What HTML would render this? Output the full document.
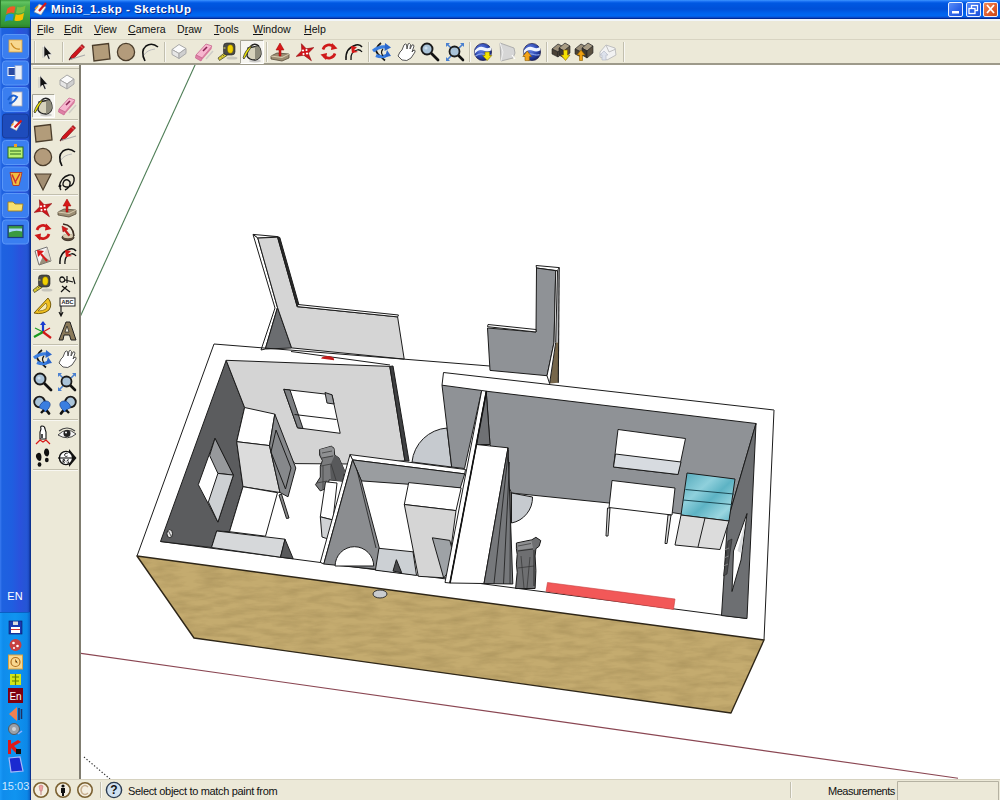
<!DOCTYPE html>
<html><head><meta charset="utf-8">
<style>
*{margin:0;padding:0;box-sizing:border-box}
html,body{width:1000px;height:800px;overflow:hidden;background:#ece9d8;font-family:"Liberation Sans",sans-serif}
.a{position:absolute}
#task{left:0;top:0;width:31px;height:800px;background:linear-gradient(90deg,#3a7af0 0,#1e62e0 2px,#1f5ee0 12px,#2a52dc 20px,#2456d4 27px,#1d48c0 29px,#0c3290 30px,#0c3290 31px)}
#wline{left:31px;top:19px;width:1px;height:781px;background:#dfe8fa}
#start{left:0;top:0;width:30px;height:28px;background:linear-gradient(180deg,#3c9a3c 0,#62c462 2px,#4cb04c 6px,#3ea43e 16px,#349634 24px,#2a7e2a 28px);border-left:1px solid #2a7a2a;border-bottom:1px solid #1c5e1c}
.qb{left:2px;width:27px;height:25px;border-radius:3px;background:linear-gradient(180deg,#4a8cf5 0,#3b7ff0 50%,#3576ea 100%);border:1px solid #2a62d8}
.qb.p{background:#1d48b8;border-color:#173c9c}
#tray{left:0;top:612px;width:30px;height:188px;background:linear-gradient(90deg,#1a9af8 0,#0f8cec 3px,#1094f0 50%,#0c88e8 90%,#0a66c8 100%);border-top:1px solid #0a5fc4}
#title{left:30px;top:0;width:970px;height:19px;background:linear-gradient(180deg,#3d95ff 0,#1a70f2 1.5px,#0058e2 3px,#0050d8 9px,#0062ec 13px,#0068f2 16px,#0a4ac8 17.5px,#002c98 18.5px,#002c98 19px)}
#ttext{left:51px;top:2.7px;color:#fff;font-weight:bold;font-size:11.5px;letter-spacing:0.55px;text-shadow:1px 1px 0 #0a2a8a;white-space:nowrap}
.tb{top:2px;width:15px;height:15px;border:1px solid #e8f0ff;border-radius:2px;background:linear-gradient(135deg,#5a8ef8 0,#2a62e8 60%,#1e50d8 100%)}
#menu{left:31px;top:19px;width:969px;height:20px;background:#ece9d8;border-top:2px solid #f2f6fa}
.m{top:3px;font-size:10.6px;color:#111;white-space:nowrap}
.m u{text-decoration:underline}
#tool{left:31px;top:39px;width:969px;height:26px;background:#ece9d8;border-top:1px solid #d8d4c2;border-bottom:2px solid #9d9a8a}
#ltool{left:31px;top:65px;width:50px;height:714px;background:#ece9d8;border-right:2px solid #807d70}
#view{left:81px;top:65px;width:919px;height:714px;background:#fff;overflow:hidden}
#status{left:31px;top:779px;width:969px;height:21px;background:#ece9d8;border-top:1px solid #d6d2c0}
.st{font-size:11px;color:#111;white-space:nowrap;letter-spacing:-0.33px}
</style></head><body>
<div id="task" class="a"></div>
<div id="start" class="a"></div>
<div id="wline" class="a"></div>
<div id="tray" class="a"></div>
<div id="title" class="a"></div>
<div id="ttext" class="a">Mini3_1.skp - SketchUp</div>
<div class="a tb" style="left:948px"></div>
<div class="a tb" style="left:966px"></div>
<div class="a tb" style="left:983px;background:linear-gradient(135deg,#f08a5a 0,#e05a2a 60%,#c84818 100%)"></div>
<div id="menu" class="a"></div>
<div class="a m" style="left:37px;top:23px"><u>F</u>ile</div>
<div class="a m" style="left:64px;top:23px"><u>E</u>dit</div>
<div class="a m" style="left:94px;top:23px"><u>V</u>iew</div>
<div class="a m" style="left:128px;top:23px"><u>C</u>amera</div>
<div class="a m" style="left:177px;top:23px">D<u>r</u>aw</div>
<div class="a m" style="left:214px;top:23px"><u>T</u>ools</div>
<div class="a m" style="left:253px;top:23px"><u>W</u>indow</div>
<div class="a m" style="left:304px;top:23px"><u>H</u>elp</div>
<div id="tool" class="a"></div>
<div id="ltool" class="a"></div>
<div id="view" class="a"></div>
<!--MODEL-->
<svg class="a" style="left:0;top:0" width="1000" height="800" viewBox="0 0 1000 800">
<defs><clipPath id="vp"><rect x="81" y="65" width="919" height="714"/></clipPath>
<filter id="wt" x="0" y="0" width="100%" height="100%" color-interpolation-filters="sRGB"><feTurbulence type="fractalNoise" baseFrequency="0.04 0.16" numOctaves="3" seed="11"/><feColorMatrix values="0 0 0 0 0.64  0 0 0 0 0.55  0 0 0 0 0.34  1.1 0 0 0 -0.38"/><feComposite in2="SourceGraphic" operator="in"/></filter>
<linearGradient id="glass" x1="0" y1="0" x2="1" y2="1"><stop offset="0" stop-color="#4fa6b8"/><stop offset=".35" stop-color="#8fd0dc"/><stop offset=".55" stop-color="#5db3c4"/><stop offset=".8" stop-color="#9ad6e0"/><stop offset="1" stop-color="#58adbf"/></linearGradient>
</defs>
<g clip-path="url(#vp)" stroke-linejoin="round">
<line x1="80" y1="653.2" x2="958" y2="778.2" stroke="#8a4652" stroke-width="1.15"/>
<line x1="195.5" y1="64" x2="80" y2="317" stroke="#4d7d55" stroke-width="1.1"/>
<line x1="84" y1="757" x2="110" y2="779" stroke="#333" stroke-width="1.2" stroke-dasharray="1.3 2"/>
<polygon points="253,234.4 277.5,236.6 257.8,238.1" fill="#fff" stroke="#1b1b1b" stroke-width="1"/>
<polygon points="253,234.4 275,308 261,350 265.3,349 277.5,307.5 257.8,238.1" fill="#fff" stroke="#1b1b1b" stroke-width="1"/>
<polygon points="277.5,307.5 291.6,348 265.3,349" fill="#6b6d70" stroke="#1b1b1b" stroke-width="1"/>
<polygon points="257.8,238.1 277.5,237.2 297.2,306.6 397.6,316.9 404.2,359.1 291.6,347.9 277.5,307.5" fill="#d5d5d5" stroke="#1b1b1b" stroke-width="1"/>
<polygon points="277.5,236.6 279.8,237.5 299.5,306.8 297.2,306.6" fill="#2a2a2a" stroke="#1b1b1b" stroke-width="1"/>
<polygon points="297.2,306.6 298,304.5 398.5,315 397.6,316.9" fill="#fff" stroke="#1b1b1b" stroke-width="1"/>
<polyline points="291,351.5 390,365" fill="none" stroke="#1b1b1b" stroke-width="1"/>
<path d="M321,358.6 A6.5,3.2 0 0 1 334,360.2 Z" fill="#c41a1a" stroke="none"/>
<polygon points="536.1,265.5 559.2,267.6 557.5,270.7 536.5,268" fill="#fff" stroke="#1b1b1b" stroke-width="1"/>
<polygon points="536.5,268 555.7,270.7 554,342.5 547,375.7 490,370.4 487.5,328 536,332" fill="#8f9296" stroke="#1b1b1b" stroke-width="1"/>
<polygon points="557.5,270.7 559.2,268 558.7,342.5 555.7,342.5" fill="#b4b5b7" stroke="none"/>
<polygon points="555.7,342.5 558.7,342.5 558.3,382.7 549.6,383.6" fill="#76664a" stroke="none"/>
<polygon points="555.7,270.7 557.5,270.7 555.7,342.5 549.6,383.6 547,375.7 554,342.5" fill="#fff" stroke="#1b1b1b" stroke-width="1"/>
<polyline points="559.2,267.6 558.3,382.7" fill="none" stroke="#1b1b1b" stroke-width="1.1"/>
<polygon points="487.5,326.7 536,332 536,329.5 488,324.5" fill="#fff" stroke="#1b1b1b" stroke-width="1"/>
<polyline points="214,344 489.7,366" fill="none" stroke="#1b1b1b" stroke-width="1"/>
<polyline points="774,410 764,640" fill="none" stroke="#1b1b1b" stroke-width="1"/>
<polyline points="137,556 214,344" fill="none" stroke="#1b1b1b" stroke-width="1"/>
<polyline points="160.5,541.5 747,618.5" fill="none" stroke="#1b1b1b" stroke-width="1"/>
<polygon points="226.2,360.3 244.6,407.5 236.7,441.7 243,486.7 229.5,531.7 216.7,531 211.5,547.5 160.5,541.5" fill="#5b5c5e" stroke="#1b1b1b" stroke-width="1"/>
<polygon points="226.2,360.3 389.8,366.4 404.9,460.8 352,464 295,463.6 244.6,407.5" fill="#d4d4d4" stroke="#1b1b1b" stroke-width="1"/>
<polygon points="389.8,366.4 393,366 409,461 404.9,460.8" fill="#3f4042" stroke="#1b1b1b" stroke-width="1"/>
<polygon points="283.8,389.3 332,394.8 340.2,433.3 297.5,427.8" fill="#fff" stroke="#1b1b1b" stroke-width="1"/>
<polygon points="283.8,389.3 290,390 303,428.5 297.5,427.8" fill="#7d7f82" stroke="#1b1b1b" stroke-width="1"/>
<polygon points="325,392.5 332,394.8 334,404 327,403" fill="#9a9c9f" stroke="#1b1b1b" stroke-width="1"/>
<polyline points="294.5,414.5 336.5,419.5" fill="none" stroke="#1b1b1b" stroke-width="1"/>
<polygon points="215,438.3 233.4,475.1 217.9,522.1 198.3,484.7" fill="#fff" stroke="#1b1b1b" stroke-width="1"/>
<polygon points="215,438.3 233.4,475.1 217.9,473.4 209.6,455.5" fill="#97999c" stroke="#1b1b1b" stroke-width="1"/>
<polygon points="217.9,473.4 233.4,475.1 217.9,522.1 208.4,501.9" fill="#cdd0d3" stroke="#1b1b1b" stroke-width="1"/>
<ellipse cx="169.7" cy="533.6" rx="2.8" ry="4" fill="#e8e8e8" stroke="#222" stroke-width="1"/><path d="M168.5,531 L171,536" stroke="#333" stroke-width="0.8"/>
<polygon points="244.6,407.5 274.8,414.1 269.5,445.6 236.7,441.7" fill="#fff" stroke="#1b1b1b" stroke-width="1"/>
<polygon points="236.7,441.7 269.5,445.6 280,492.5 243,486.7" fill="#dcdcdc" stroke="#1b1b1b" stroke-width="1"/>
<polygon points="274.8,414.1 295.8,468 288,496.8 280,492.5 269.5,445.6" fill="#86888b" stroke="#1b1b1b" stroke-width="1"/>
<polyline points="276,430 291,468 285.5,489 271,452 276,430" fill="none" stroke="#1b1b1b" stroke-width="1"/>
<polygon points="243,486.7 277.5,492.7 265.5,536.2 229.5,531.7" fill="#fff" stroke="#1b1b1b" stroke-width="1"/>
<polygon points="279,495 281.5,494 289,518 286.5,518.5" fill="#8a8a8a" stroke="#1b1b1b" stroke-width="1"/>
<polygon points="216.7,531 285,539.2 280.5,557.2 211.5,547.5" fill="#d6d8da" stroke="#1b1b1b" stroke-width="1"/>
<polygon points="285,539.2 293.2,558.7 280.5,557.2" fill="#58595b" stroke="#1b1b1b" stroke-width="1"/>
<polygon points="319.6,449.6 331.3,446.2 334,448.2 334.7,455.1 338.9,457.9 344.4,470.2 342.3,481.2 329.2,479.9 327.2,488.1 320.3,490.9 315.5,484.7 320.3,477.1 320.3,466.1 322.4,460.6 319.6,455.1" fill="#7a7b7d" stroke="#222" stroke-width="1"/>
<polygon points="334.7,455.1 338.9,457.9 344.4,470.2 342.3,481.2 331,480 330,466" fill="#58595b" stroke="none"/>
<polygon points="320,449.5 331,446.5 334,449 334,455 322,458" fill="#8f9092" stroke="none"/>
<polyline points="322,453 332,451" fill="none" stroke="#333" stroke-width="0.7"/>
<polyline points="322,458 333,456" fill="none" stroke="#333" stroke-width="0.8"/>
<polyline points="321,466 331,464 336,480" fill="none" stroke="#333" stroke-width="0.7"/>
<polyline points="323,466 323,489" fill="none" stroke="#333" stroke-width="0.7"/>
<polyline points="317,483 327,481" fill="none" stroke="#333" stroke-width="0.7"/>
<polygon points="325.5,481.8 337,483 333,520 320.3,516.8" fill="#fff" stroke="#1b1b1b" stroke-width="1"/>
<polygon points="320.3,516.8 333,520 331,540 322,537" fill="#d0d2d4" stroke="#1b1b1b" stroke-width="1"/>
<polygon points="350,454.6 465.5,469.5 464.7,473.9 352.6,459.9" fill="#fff" stroke="#1b1b1b" stroke-width="1"/>
<polygon points="352.6,459.9 464.7,473.9 460.3,487.9 361.4,480.9" fill="#9a9da0" stroke="#1b1b1b" stroke-width="1"/>
<polygon points="350,454.6 352.6,459.9 323.8,564 320.3,562.3" fill="#fff" stroke="#1b1b1b" stroke-width="1"/>
<polygon points="352.6,459.9 361.4,480.9 379.8,550 376.3,569.3 323.8,564" fill="#8b8d90" stroke="#1b1b1b" stroke-width="1"/>
<polyline points="357,470 376,548" fill="none" stroke="#1b1b1b" stroke-width="0.8"/>
<path d="M335.1,566 A19.3,19.3 0 0 1 373.7,566 Z" fill="#fff" stroke="#1b1b1b" stroke-width="1"/>
<polygon points="378.9,548.3 413,551.8 416.5,575.4 375.4,570.2" fill="#ccd0d4" stroke="#1b1b1b" stroke-width="1"/>
<polygon points="393,571 396.4,559.7 401.7,572.8" fill="#4a4b4d" stroke="#1b1b1b" stroke-width="1"/>
<polygon points="408.7,482.6 461.2,487.9 456,510.6 404.3,504.5" fill="#fff" stroke="#1b1b1b" stroke-width="1"/>
<polygon points="404.3,504.5 456,510.6 447,578 418.3,576.3" fill="#d5d5d5" stroke="#1b1b1b" stroke-width="1"/>
<path d="M432.3,537.8 L449.8,540.4 A36,36 0 0 1 443.7,578 Z" fill="#9ea2a6" stroke="#1b1b1b" stroke-width="1"/>
<polygon points="443.5,372.5 774,410 756,423.5 486.2,391.2 481.7,390.5 442,385.2" fill="#fff" stroke="none"/>
<polyline points="442,385.2 443.5,372.5 774,410" fill="none" stroke="#1b1b1b" stroke-width="1"/>
<path d="M412,462 A38,38 0 0 1 447,428 L451.7,467 Z" fill="#c6cacf" stroke="#1b1b1b" stroke-width="1"/>
<polygon points="442,385.2 481.7,390.5 464.5,468.5 451.7,467" fill="#8f9296" stroke="#1b1b1b" stroke-width="1"/>
<polygon points="486.2,391.2 756,423.5 727.5,521 609,503 511.5,493 490,444.5" fill="#8f9296" stroke="#1b1b1b" stroke-width="1"/>
<polygon points="756,423.5 747,618.5 721.5,615.5 727.5,521" fill="#6d6f72" stroke="#1b1b1b" stroke-width="1"/>
<polygon points="747,513.5 733.5,551 732,591.5 741,560" fill="#fff" stroke="#1b1b1b" stroke-width="1"/>
<polygon points="745,522 741,553 737.5,551" fill="#d8dadc" stroke="none"/>
<polygon points="728,541 732,539 727,574 723.5,576" fill="#4a4b4d" stroke="#222" stroke-width="0.6"/>
<polyline points="724.5,550 729,548" fill="none" stroke="#aaa" stroke-width="0.6"/>
<polyline points="724,558 728.5,556" fill="none" stroke="#aaa" stroke-width="0.6"/>
<polyline points="723.5,566 728,564" fill="none" stroke="#aaa" stroke-width="0.6"/>
<polygon points="481.7,390.5 486.5,391.2 450,583 445,582.5" fill="#fff" stroke="#1b1b1b" stroke-width="1"/>
<polygon points="486.2,391.2 490,444.5 476.5,444.5" fill="#6f7174" stroke="#1b1b1b" stroke-width="1"/>
<polygon points="476.5,444.5 508,447.8 484,583.5 450,583" fill="#fff" stroke="#1b1b1b" stroke-width="1"/>
<polygon points="508,447.8 512.8,584 484,583.5" fill="#76787b" stroke="#1b1b1b" stroke-width="1"/>
<polyline points="508.5,450 494,583.5" fill="none" stroke="#1b1b1b" stroke-width="0.8"/>
<polyline points="509.5,462 503.5,584" fill="none" stroke="#1b1b1b" stroke-width="0.8"/>
<polyline points="510.5,492 510,584" fill="none" stroke="#1b1b1b" stroke-width="0.7"/>
<polyline points="486.5,391.2 450,583" fill="none" stroke="#111" stroke-width="1.6"/>
<path d="M511.5,493 L532.5,497 A26,26 0 0 1 511.5,523 Z" fill="#c6cacf" stroke="#1b1b1b" stroke-width="1"/>
<polygon points="618,429.5 685.5,438.5 678,474.5 613.5,467" fill="#fff" stroke="#1b1b1b" stroke-width="1"/>
<polygon points="615.5,454 681,462 678,474.5 613.5,467" fill="#d7dbe0" stroke="#1b1b1b" stroke-width="1"/>
<polygon points="612,480.5 675,488 672,515 609,507.5" fill="#fff" stroke="#1b1b1b" stroke-width="1"/>
<polygon points="607.5,508 610,508 608,536 606,536" fill="#ddd" stroke="#1b1b1b" stroke-width="1"/>
<polygon points="668,515 671,515 667,543.5 665,543.5" fill="#ddd" stroke="#1b1b1b" stroke-width="1"/>
<polygon points="687,473 735,479 729,521 681,515" fill="url(#glass)" stroke="#1b1b1b" stroke-width="1"/>
<polyline points="685.5,489.5 734,494" fill="none" stroke="#1d4a55" stroke-width="1"/>
<polyline points="683,500 731.5,504.5" fill="none" stroke="#1d4a55" stroke-width="1"/>
<polygon points="681,515 729,521 720,549.5 675,545" fill="#dcdcdc" stroke="#1b1b1b" stroke-width="1"/>
<polyline points="705,518 698,547" fill="none" stroke="#1b1b1b" stroke-width="1"/>
<polygon points="547.5,582.5 675,599 673.5,609.5 546,591.5" fill="#f25858" stroke="#c84040" stroke-width="0.6"/>
<polygon points="516.4,543 531.8,539.8 535.9,537.3 540.8,540.6 539.1,546.3 535.9,548.7 535.1,556 535.9,570.7 535.1,588.5 515.6,588.5 517.2,572.3 516.4,564.1 517.2,554.4 516.4,548.7" fill="#6e6f71" stroke="#1a1a1a" stroke-width="1"/>
<polygon points="517,543.5 531.5,540.5 533,548 518,550" fill="#8e8f91" stroke="none"/>
<polyline points="518,546 531,543.5" fill="none" stroke="#333" stroke-width="0.7"/>
<polyline points="518,551 533,549" fill="none" stroke="#222" stroke-width="0.8"/>
<polyline points="521,556 524,588" fill="none" stroke="#333" stroke-width="0.7"/>
<polyline points="530,557 527,588" fill="none" stroke="#333" stroke-width="0.7"/>
<polyline points="518,568 534,566" fill="none" stroke="#333" stroke-width="0.7"/>
<polyline points="534,550 534,586" fill="none" stroke="#222" stroke-width="0.9"/>
<polygon points="137,556 764,640 731,713 194,638" fill="#c4ab6f" stroke="none"/>
<polygon points="137,556 764,640 731,713 194,638" fill="#c8ab6e" filter="url(#wt)" stroke="none"/>
<polygon points="137,556 764,640 731,713 194,638" fill="none" stroke="#2e2618" stroke-width="1.4"/>
<ellipse cx="380" cy="594" rx="7" ry="4" fill="#c9ccd0" stroke="#333" stroke-width="1"/>
</g>
</svg>
<!--/MODEL-->
<div id="status" class="a"></div>
<div class="a st" style="left:128px;top:785px">Select object to match paint from</div>
<div class="a st" style="left:828px;top:785px;letter-spacing:-0.5px">Measurements</div>
<!--CHROME-->
<svg class="a" style="left:0;top:0" width="1000" height="800" viewBox="0 0 1000 800">
<defs><radialGradient id="glb" cx=".4" cy=".35" r=".7"><stop offset="0" stop-color="#6a86e8"/><stop offset=".6" stop-color="#2a46b0"/><stop offset="1" stop-color="#141c60"/></radialGradient></defs>
<rect x="240.5" y="40.5" width="23" height="23" fill="#f6f5f0"/>
<path d="M240.5,63.5 L240.5,40.5 L263.5,40.5" fill="none" stroke="#a5a394" stroke-width="1"/>
<path d="M263.5,40.5 L263.5,63.5 L240.5,63.5" fill="none" stroke="#fff" stroke-width="1"/>
<line x1="34.5" y1="41" x2="34.5" y2="63" stroke="#c2bfae" stroke-width="1"/>
<line x1="35.5" y1="41" x2="35.5" y2="63" stroke="#f8f7f2" stroke-width="1"/>
<line x1="62.5" y1="42" x2="62.5" y2="62" stroke="#c2bfae" stroke-width="1"/>
<line x1="63.5" y1="42" x2="63.5" y2="62" stroke="#f8f7f2" stroke-width="1"/>
<line x1="164.5" y1="42" x2="164.5" y2="62" stroke="#c2bfae" stroke-width="1"/>
<line x1="165.5" y1="42" x2="165.5" y2="62" stroke="#f8f7f2" stroke-width="1"/>
<line x1="266.5" y1="42" x2="266.5" y2="62" stroke="#c2bfae" stroke-width="1"/>
<line x1="267.5" y1="42" x2="267.5" y2="62" stroke="#f8f7f2" stroke-width="1"/>
<line x1="368.5" y1="42" x2="368.5" y2="62" stroke="#c2bfae" stroke-width="1"/>
<line x1="369.5" y1="42" x2="369.5" y2="62" stroke="#f8f7f2" stroke-width="1"/>
<line x1="469.5" y1="42" x2="469.5" y2="62" stroke="#c2bfae" stroke-width="1"/>
<line x1="470.5" y1="42" x2="470.5" y2="62" stroke="#f8f7f2" stroke-width="1"/>
<line x1="546.5" y1="42" x2="546.5" y2="62" stroke="#c2bfae" stroke-width="1"/>
<line x1="547.5" y1="42" x2="547.5" y2="62" stroke="#f8f7f2" stroke-width="1"/>
<line x1="623.5" y1="42" x2="623.5" y2="62" stroke="#c2bfae" stroke-width="1"/>
<line x1="624.5" y1="42" x2="624.5" y2="62" stroke="#f8f7f2" stroke-width="1"/>
<g transform="translate(47,52) scale(1.0)"><path d="M-3,-6.5 L-3,5.5 L-0.5,3 L1.5,7.5 L3.2,6.8 L1.3,2.5 L4.8,2.5 Z" fill="#111" stroke="#fff" stroke-width="0.6"/><path d="M-4,-5 L-4,6" stroke="#bbb" stroke-width="0.8"/></g>
<g transform="translate(76,52) scale(1.0)"><path d="M-7,8 L-4.5,3.5 L6,-7.5 L8.5,-5 L-2,6 Z" fill="#d0141c" stroke="#7a0a0e" stroke-width="0.7"/><path d="M-7,8 L-5.5,5 L-4,6.5 Z" fill="#222"/><path d="M-6,7.5 L9,3" stroke="#aaa" stroke-width="1.2"/><path d="M4.5,-6 L7,-3.5" stroke="#f4a0a0" stroke-width="0.8"/></g>
<g transform="translate(101,52) scale(1.0)"><path d="M-8.5,-6.5 L7.5,-8.5 L9,7 L-7,9 Z" fill="#b29c7a" stroke="#4b3d2b" stroke-width="1.3"/></g>
<g transform="translate(126,52) scale(1.0)"><circle cx="0" cy="0" r="8.6" fill="#b39b7b" stroke="#4b3d2b" stroke-width="1.3"/></g>
<g transform="translate(150,52) scale(1.0)"><path d="M-5,9 Q-10,-1 -4,-6 Q2,-10 8,-5" fill="none" stroke="#111" stroke-width="1.6"/><path d="M-6,3 Q-3,-2 5,-3" fill="none" stroke="#bbb" stroke-width="1"/></g>
<g transform="translate(179,51.5) scale(1.0)"><path d="M-7,-2 L0,-7 L7,-3 L0,2 Z" fill="#fbfbfb" stroke="#a8a8a8" stroke-width="1"/><path d="M-7,-2 L0,2 L0,7 L-7,3 Z" fill="#e6e6e6" stroke="#a8a8a8" stroke-width="1"/><path d="M0,2 L7,-3 L7,2 L0,7 Z" fill="#cfcfcf" stroke="#a8a8a8" stroke-width="1"/></g>
<g transform="translate(204,52) scale(1.0)"><path d="M-8,3 L2,-8 L8,-6 L-2,6 Z" fill="#f7b6cf" stroke="#c86a90" stroke-width="0.8"/><path d="M-8,3 L-2,6 L-3,9 L-8.5,6 Z" fill="#e07fa6" stroke="#c86a90" stroke-width="0.8"/><path d="M-2,6 L8,-6 L7.5,-3 L-3,9 Z" fill="#d9789e"/><path d="M-1,-1 L3,-5" stroke="#8a2050" stroke-width="1.6"/><path d="M2,7 L9,-1" stroke="#bbb" stroke-width="1.5" opacity=".6"/></g>
<g transform="translate(228,52) scale(1.0)"><ellipse cx="4" cy="6" rx="5.5" ry="1.6" fill="#9a9a9a" opacity=".45"/><path d="M-3,0.5 L-10,6 L-8.5,8.5 L-1,3.5 Z" fill="#dccc30" stroke="#3a3a20" stroke-width="0.7"/><path d="M-5,3 L-4,4 M-7,4.5 L-6,5.5" stroke="#333" stroke-width="0.7"/><rect x="-4.5" y="-9" width="11.5" height="12" rx="3.2" fill="#4a4a46" stroke="#222" stroke-width="0.6"/><ellipse cx="2.3" cy="-3" rx="2.9" ry="4.2" fill="#f0d000" stroke="#7a6600" stroke-width="0.5"/><path d="M-4.5,-4 L-2.5,-4" stroke="#e8e070" stroke-width="1"/></g>
<g transform="translate(252,52) scale(1.0)"><ellipse cx="3" cy="9" rx="6" ry="1.5" fill="#999" opacity=".45"/><path d="M-4,-4 L6,-6 Q9,-4 9,2 Q8,7 3,8 Q-3,8 -5,4 Z" fill="#d6d2bc" stroke="#222" stroke-width="1.3"/><path d="M3,-5.2 L6,-6 Q9,-4 9,2 Q8,7 3,8 Z" fill="#8e8c7c"/><path d="M-2,-5 Q2,-10 7,-6" fill="none" stroke="#222" stroke-width="1.4"/><path d="M-9,6 Q-7,-2 0,-7 Q-1,-4 -4,0 Q-6,4 -8,7 Z" fill="#f0e800" stroke="#333" stroke-width="0.8"/></g>
<g transform="translate(280,52) scale(1.0)"><path d="M-9,4 L-3,1 L9,2 L9,6 L2,9 L-9,7 Z" fill="#9c8e74" stroke="#554a38" stroke-width="0.8"/><path d="M-9,4 L2,5.5 L9,2" fill="none" stroke="#e8dcc0" stroke-width="0.8"/><path d="M-1,4 L-1,-2 L-4,-2 L0,-9 L4,-2 L1,-2 L1,4 Z" fill="#d81818" stroke="#900" stroke-width="0.5"/></g>
<g transform="translate(305,52) scale(1.0)"><path d="M-3.6,-8.3 L1.2,-3.2 L8.8,-4.4 L3.2,1.2 L6.4,8.7 L-1.2,3.2 L-8.8,4.4 L-3.2,-1.2 Z" fill="#d0141a" stroke="#8a0c0c" stroke-width="0.6"/><circle cx="-2" cy="-1.5" r="1.1" fill="#fff"/><circle cx="1.5" cy="-2" r="1.1" fill="#fff"/><circle cx="-1.5" cy="2" r="1.1" fill="#fff"/><circle cx="2" cy="1.5" r="1.1" fill="#fff"/></g>
<g transform="translate(329,51.5) scale(1.0)"><path d="M-6,-2 A6.5,6.5 0 0 1 5,-4.5" fill="none" stroke="#cf1a1a" stroke-width="2.6"/><path d="M3,-8.5 L8.5,-3 L2,-1.5 Z" fill="#cf1a1a"/><path d="M6,2 A6.5,6.5 0 0 1 -5,4.5" fill="none" stroke="#cf1a1a" stroke-width="2.6"/><path d="M-3,8.5 L-8.5,3 L-2,1.5 Z" fill="#cf1a1a"/></g>
<g transform="translate(353,52) scale(1.0)"><path d="M-7,8 Q-8,-4 3,-7 Q7,-8 9,-5" fill="none" stroke="#111" stroke-width="1.5"/><path d="M-2,8 Q-3,0 4,-2 Q7,-3 9,0" fill="none" stroke="#111" stroke-width="1.3"/><path d="M-2,-6 L4,-5 L1,-2 L5,0 L-1,1 Z" fill="#d81818"/></g>
<g transform="translate(382,52) scale(1.0)"><path d="M-1,-9 Q-9,-3 -4,2 Q-1,5 3,8.5" fill="none" stroke="#161616" stroke-width="1.7"/><path d="M-9,-1 Q-3,-6 4,-5" fill="none" stroke="#3a7ee0" stroke-width="3.2"/><path d="M3,-9 L9,-4.5 L2.5,-1 Z" fill="#2a66cc"/><path d="M-6,3.5 Q1,6.5 7,2" fill="none" stroke="#3a7ee0" stroke-width="3.2"/><path d="M5,-2 L9,4 L3,5 Z" fill="#2a66cc"/><path d="M1,-3 Q-2,0 1,4" fill="none" stroke="#161616" stroke-width="1.2"/></g>
<g transform="translate(406,52) scale(1.0)"><path d="M-8,4 Q-6,-1 -4,-2 L-2,-7 Q-1,-9 0.5,-7.5 L1,-3 L2,-8 Q3.5,-9.5 4.5,-7.5 L4,-3 L6,-7 Q7.5,-8 8,-6 L6,0 L8,-2 Q9.5,-2 9,0 L5,6 Q1,10 -4,8 Z" fill="#fff" stroke="#444" stroke-width="0.9"/></g>
<g transform="translate(430,52) scale(1.0)"><path d="M1,1 L8,8" stroke="#111" stroke-width="2.8" stroke-linecap="round"/><circle cx="-3" cy="-3" r="5.5" fill="#a9c3d8" stroke="#1a1a1a" stroke-width="1.9"/><circle cx="-4" cy="-4" r="1.6" fill="#cfe0ee"/></g>
<g transform="translate(455,52) scale(1.0)"><path d="M-9,-9 L-5,-9 L-9,-5 Z M9,-9 L9,-5 L5,-9 Z M-9,9 L-9,5 L-5,9 Z" fill="#4a80d0"/><path d="M-8,-8 L-4,-4 M8,-8 L4,-4 M-8,8 L-4,4" stroke="#4a80d0" stroke-width="1.6"/><path d="M2,2 L8,8" stroke="#111" stroke-width="2.6" stroke-linecap="round"/><circle cx="-0.5" cy="-0.5" r="5" fill="#a9c3d8" stroke="#1a1a1a" stroke-width="1.8"/></g>
<g transform="translate(483,52) scale(1.0)"><circle cx="0" cy="0" r="8.6" fill="url(#glb)" stroke="#20204a" stroke-width="0.7"/><path d="M-8.2,-1.5 Q-4,-7 1.5,-4.5 Q5,-3 8,-5 L8.4,-1.8 Q4.5,0.5 1,-1.2 Q-4,-4 -8.4,2 Z" fill="#eef4ff"/><path d="M-7.5,4 Q-3,0.5 2,2.5 Q5,3.5 7.5,2.5" fill="none" stroke="#8aa4e8" stroke-width="1.2"/><path d="M2,0 L6.5,0 L6.5,3.5 L8.8,3.5 L4.2,8.6 L-0.4,3.5 L2,3.5 Z" fill="#f4e400" stroke="#8a7a00" stroke-width="0.6"/></g>
<g transform="translate(508,52) scale(1.0)"><path d="M-8,-9 L6,-4 L7,1 L5,6 L-7,9 Z" fill="#d6d6d6" stroke="#a8a8a8" stroke-width="0.9"/><path d="M-8,-9 L-5,0 L-7,9" fill="none" stroke="#efefef" stroke-width="1"/><path d="M4,3 L7,7" stroke="#fff" stroke-width="1.2"/></g>
<g transform="translate(532,52) scale(1.0)"><circle cx="0" cy="0" r="8.6" fill="url(#glb)" stroke="#20204a" stroke-width="0.7"/><path d="M-8.2,-1.5 Q-4,-7 1.5,-4.5 Q5,-3 8,-5 L8.4,-1.8 Q4.5,0.5 1,-1.2 Q-4,-4 -8.4,2 Z" fill="#eef4ff"/><path d="M-7.5,4 Q-3,0.5 2,2.5 Q5,3.5 7.5,2.5" fill="none" stroke="#8aa4e8" stroke-width="1.2"/><path d="M-7,8.6 L-2.6,8.6 L-2.6,4.5 L-0.4,4.5 L-4.8,-1 L-9.2,4.5 L-7,4.5 Z" fill="#f4a418" stroke="#8a5a00" stroke-width="0.6"/></g>
<g transform="translate(561,52) scale(1.0)"><path d="M-9,-3 L-3,-8 L3,-5 L-3,0 Z" fill="#9a8e78" stroke="#333" stroke-width="0.8"/><path d="M-9,-3 L-3,0 L-3,5 L-9,2 Z" fill="#4a4236" stroke="#222" stroke-width="0.6"/><path d="M-3,0 L3,-5 L3,0 L-3,5 Z" fill="#6a5e4c" stroke="#222" stroke-width="0.6"/><path d="M-2,-4 L4,-9 L9,-6 L3,-1 Z" fill="#a89c84" stroke="#333" stroke-width="0.8"/><path d="M-2,-4 L3,-1 L3,6 L-2,3 Z" fill="#3e3830" stroke="#222" stroke-width="0.6"/><path d="M3,-1 L9,-6 L9,1 L3,6 Z" fill="#5a5040" stroke="#222" stroke-width="0.6"/><path d="M2.5,-2 L2.5,3 L0,3 L4.5,8.5 L9,3 L6.5,3 L6.5,-2 Z" fill="#f4e000" stroke="#8a6000" stroke-width="0.6"/></g>
<g transform="translate(584,52) scale(1.0)"><path d="M-9,-3 L-3,-8 L3,-5 L-3,0 Z" fill="#9a8e78" stroke="#333" stroke-width="0.8"/><path d="M-9,-3 L-3,0 L-3,5 L-9,2 Z" fill="#4a4236" stroke="#222" stroke-width="0.6"/><path d="M-3,0 L3,-5 L3,0 L-3,5 Z" fill="#6a5e4c" stroke="#222" stroke-width="0.6"/><path d="M-2,-4 L4,-9 L9,-6 L3,-1 Z" fill="#a89c84" stroke="#333" stroke-width="0.8"/><path d="M-2,-4 L3,-1 L3,6 L-2,3 Z" fill="#3e3830" stroke="#222" stroke-width="0.6"/><path d="M3,-1 L9,-6 L9,1 L3,6 Z" fill="#5a5040" stroke="#222" stroke-width="0.6"/><path d="M-4.5,8.5 L-4.5,3 L-7,3 L-3,-2 L1,3 L-1.5,3 L-1.5,8.5 Z" fill="#f0a010" stroke="#8a6000" stroke-width="0.6"/></g>
<g transform="translate(608,52) scale(1.0)"><path d="M-8,0 L-2,-7 L7,-4 L8,3 L-1,8 L-8,5 Z" fill="#f2f2f2" stroke="#c0c0c0" stroke-width="1"/><path d="M-2,-7 L1,0 L8,-3" fill="none" stroke="#c0c0c0" stroke-width="1"/><path d="M-6,8 L-6,3 L-8,3 L-4,-1 L0,3 L-2,3 L-2,8 Z" fill="#dde2ec" stroke="#b8bcc8" stroke-width="0.7"/></g>
<line x1="33" y1="65.5" x2="79" y2="65.5" stroke="#fff" stroke-width="1"/>
<line x1="33" y1="68.5" x2="79" y2="68.5" stroke="#bdbaa8" stroke-width="1.2"/>
<rect x="32.5" y="94.5" width="22" height="23" fill="#f6f5f0"/>
<path d="M32.5,117.5 L32.5,94.5 L54.5,94.5" fill="none" stroke="#a5a394" stroke-width="1"/>
<path d="M54.5,94.5 L54.5,117.5 L32.5,117.5" fill="none" stroke="#fff" stroke-width="1"/>
<line x1="33" y1="119.5" x2="78" y2="119.5" stroke="#c2bfae" stroke-width="1"/>
<line x1="33" y1="120.5" x2="78" y2="120.5" stroke="#f8f7f2" stroke-width="1"/>
<line x1="33" y1="194.5" x2="78" y2="194.5" stroke="#c2bfae" stroke-width="1"/>
<line x1="33" y1="195.5" x2="78" y2="195.5" stroke="#f8f7f2" stroke-width="1"/>
<line x1="33" y1="269.5" x2="78" y2="269.5" stroke="#c2bfae" stroke-width="1"/>
<line x1="33" y1="270.5" x2="78" y2="270.5" stroke="#f8f7f2" stroke-width="1"/>
<line x1="33" y1="344.5" x2="78" y2="344.5" stroke="#c2bfae" stroke-width="1"/>
<line x1="33" y1="345.5" x2="78" y2="345.5" stroke="#f8f7f2" stroke-width="1"/>
<line x1="33" y1="419.5" x2="78" y2="419.5" stroke="#c2bfae" stroke-width="1"/>
<line x1="33" y1="420.5" x2="78" y2="420.5" stroke="#f8f7f2" stroke-width="1"/>
<line x1="33" y1="469.5" x2="78" y2="469.5" stroke="#c2bfae" stroke-width="1"/>
<line x1="33" y1="470.5" x2="78" y2="470.5" stroke="#f8f7f2" stroke-width="1"/>
<g transform="translate(43,82) scale(1.0)"><path d="M-3,-6.5 L-3,5.5 L-0.5,3 L1.5,7.5 L3.2,6.8 L1.3,2.5 L4.8,2.5 Z" fill="#111" stroke="#fff" stroke-width="0.6"/><path d="M-4,-5 L-4,6" stroke="#bbb" stroke-width="0.8"/></g>
<g transform="translate(67,82) scale(1.0)"><path d="M-7,-2 L0,-7 L7,-3 L0,2 Z" fill="#fbfbfb" stroke="#a8a8a8" stroke-width="1"/><path d="M-7,-2 L0,2 L0,7 L-7,3 Z" fill="#e6e6e6" stroke="#a8a8a8" stroke-width="1"/><path d="M0,2 L7,-3 L7,2 L0,7 Z" fill="#cfcfcf" stroke="#a8a8a8" stroke-width="1"/></g>
<g transform="translate(43,106) scale(1.0)"><ellipse cx="3" cy="9" rx="6" ry="1.5" fill="#999" opacity=".45"/><path d="M-4,-4 L6,-6 Q9,-4 9,2 Q8,7 3,8 Q-3,8 -5,4 Z" fill="#d6d2bc" stroke="#222" stroke-width="1.3"/><path d="M3,-5.2 L6,-6 Q9,-4 9,2 Q8,7 3,8 Z" fill="#8e8c7c"/><path d="M-2,-5 Q2,-10 7,-6" fill="none" stroke="#222" stroke-width="1.4"/><path d="M-9,6 Q-7,-2 0,-7 Q-1,-4 -4,0 Q-6,4 -8,7 Z" fill="#f0e800" stroke="#333" stroke-width="0.8"/></g>
<g transform="translate(67,106) scale(1.0)"><path d="M-8,3 L2,-8 L8,-6 L-2,6 Z" fill="#f7b6cf" stroke="#c86a90" stroke-width="0.8"/><path d="M-8,3 L-2,6 L-3,9 L-8.5,6 Z" fill="#e07fa6" stroke="#c86a90" stroke-width="0.8"/><path d="M-2,6 L8,-6 L7.5,-3 L-3,9 Z" fill="#d9789e"/><path d="M-1,-1 L3,-5" stroke="#8a2050" stroke-width="1.6"/><path d="M2,7 L9,-1" stroke="#bbb" stroke-width="1.5" opacity=".6"/></g>
<g transform="translate(43,133) scale(1.0)"><path d="M-8.5,-6.5 L7.5,-8.5 L9,7 L-7,9 Z" fill="#b29c7a" stroke="#4b3d2b" stroke-width="1.3"/></g>
<g transform="translate(67,133) scale(1.0)"><path d="M-7,8 L-4.5,3.5 L6,-7.5 L8.5,-5 L-2,6 Z" fill="#d0141c" stroke="#7a0a0e" stroke-width="0.7"/><path d="M-7,8 L-5.5,5 L-4,6.5 Z" fill="#222"/><path d="M-6,7.5 L9,3" stroke="#aaa" stroke-width="1.2"/><path d="M4.5,-6 L7,-3.5" stroke="#f4a0a0" stroke-width="0.8"/></g>
<g transform="translate(43,157) scale(1.0)"><circle cx="0" cy="0" r="8.6" fill="#b39b7b" stroke="#4b3d2b" stroke-width="1.3"/></g>
<g transform="translate(67,157) scale(1.0)"><path d="M-5,9 Q-10,-1 -4,-6 Q2,-10 8,-5" fill="none" stroke="#111" stroke-width="1.6"/><path d="M-6,3 Q-3,-2 5,-3" fill="none" stroke="#bbb" stroke-width="1"/></g>
<g transform="translate(43,181) scale(1.0)"><path d="M-8,-7 L8,-7 L0,9 Z" fill="#a28e72" stroke="#4b3d2b" stroke-width="1.2"/></g>
<g transform="translate(67,181) scale(1.0)"><path d="M-8,6 Q-6,-4 2,-6 Q8,-7 7,0 Q6,6 -1,6 Q-6,5 -3,0 Q0,-3 3,1 Q4,6 -2,9 M-6,9 Q-8,7 -6,4" fill="none" stroke="#111" stroke-width="1.4"/></g>
<g transform="translate(43,208) scale(1.0)"><path d="M-3.6,-8.3 L1.2,-3.2 L8.8,-4.4 L3.2,1.2 L6.4,8.7 L-1.2,3.2 L-8.8,4.4 L-3.2,-1.2 Z" fill="#d0141a" stroke="#8a0c0c" stroke-width="0.6"/><circle cx="-2" cy="-1.5" r="1.1" fill="#fff"/><circle cx="1.5" cy="-2" r="1.1" fill="#fff"/><circle cx="-1.5" cy="2" r="1.1" fill="#fff"/><circle cx="2" cy="1.5" r="1.1" fill="#fff"/></g>
<g transform="translate(67,208) scale(1.0)"><path d="M-9,4 L-3,1 L9,2 L9,6 L2,9 L-9,7 Z" fill="#9c8e74" stroke="#554a38" stroke-width="0.8"/><path d="M-9,4 L2,5.5 L9,2" fill="none" stroke="#e8dcc0" stroke-width="0.8"/><path d="M-1,4 L-1,-2 L-4,-2 L0,-9 L4,-2 L1,-2 L1,4 Z" fill="#d81818" stroke="#900" stroke-width="0.5"/></g>
<g transform="translate(43,232) scale(1.0)"><path d="M-6,-2 A6.5,6.5 0 0 1 5,-4.5" fill="none" stroke="#cf1a1a" stroke-width="2.6"/><path d="M3,-8.5 L8.5,-3 L2,-1.5 Z" fill="#cf1a1a"/><path d="M6,2 A6.5,6.5 0 0 1 -5,4.5" fill="none" stroke="#cf1a1a" stroke-width="2.6"/><path d="M-3,8.5 L-8.5,3 L-2,1.5 Z" fill="#cf1a1a"/></g>
<g transform="translate(67,232) scale(1.0)"><ellipse cx="1" cy="5.5" rx="6" ry="3.2" fill="#5a4a38" stroke="#2a2018" stroke-width="0.8"/><ellipse cx="1" cy="4" rx="5" ry="2.2" fill="#d8ccb0"/><path d="M-4,-8 Q6,-7 7,4" fill="none" stroke="#3a2a20" stroke-width="1.6"/><path d="M3,3 L-1,-2 L1,-3 L-5,-6 L-4,0 L-2.5,-1 L1.5,4 Z" fill="#d81818" stroke="#8a0c0c" stroke-width="0.5"/></g>
<g transform="translate(43,256) scale(1.0)"><path d="M-8,-5 L4,-9 L8,5 L-4,9 Z" fill="#f4f4f4" stroke="#555" stroke-width="0.8"/><path d="M0,0 L8,5 L-4,9 Z" fill="#8a7c64" opacity=".85"/><path d="M0,0 L4,-9 L8,5 Z" fill="#d8d0c0" opacity=".7"/><path d="M4,5 L-2,-2" stroke="#d81818" stroke-width="2"/><path d="M-6,-6 L1,-5 L-5,1 Z" fill="#d81818"/></g>
<g transform="translate(67,256) scale(1.0)"><path d="M-7,8 Q-8,-4 3,-7 Q7,-8 9,-5" fill="none" stroke="#111" stroke-width="1.5"/><path d="M-2,8 Q-3,0 4,-2 Q7,-3 9,0" fill="none" stroke="#111" stroke-width="1.3"/><path d="M-2,-6 L4,-5 L1,-2 L5,0 L-1,1 Z" fill="#d81818"/></g>
<g transform="translate(43,284) scale(1.0)"><ellipse cx="4" cy="6" rx="5.5" ry="1.6" fill="#9a9a9a" opacity=".45"/><path d="M-3,0.5 L-10,6 L-8.5,8.5 L-1,3.5 Z" fill="#dccc30" stroke="#3a3a20" stroke-width="0.7"/><path d="M-5,3 L-4,4 M-7,4.5 L-6,5.5" stroke="#333" stroke-width="0.7"/><rect x="-4.5" y="-9" width="11.5" height="12" rx="3.2" fill="#4a4a46" stroke="#222" stroke-width="0.6"/><ellipse cx="2.3" cy="-3" rx="2.9" ry="4.2" fill="#f0d000" stroke="#7a6600" stroke-width="0.5"/><path d="M-4.5,-4 L-2.5,-4" stroke="#e8e070" stroke-width="1"/></g>
<g transform="translate(67,284) scale(1.0)"><path d="M-7,-6 Q-8,-1 -4,-2 Q-1,-3 -3,-6 Q-5,-8 -7,-6" fill="none" stroke="#111" stroke-width="1.2"/><path d="M0,-8 L0,-1 M-2,-4 L6,-2 M6,-7 L8,0 M-5,2 L3,8 M-6,8 L0,2" stroke="#111" stroke-width="1.2"/></g>
<g transform="translate(43,307) scale(1.0)"><path d="M-9,6 L5,-9 Q10,-3 6,3 Q0,8 -9,6 Z" fill="#f0c020" stroke="#6a5000" stroke-width="0.9"/><path d="M-5,4 L3,-4 Q5,-1 3,2 Q0,4 -5,4 Z" fill="#f6e9b0" stroke="#6a5000" stroke-width="0.6"/></g>
<g transform="translate(67,307) scale(1.0)"><rect x="-7" y="-9" width="15" height="8" fill="#fff" stroke="#222" stroke-width="1"/><text x="0.5" y="-3" font-size="5.5" font-weight="bold" text-anchor="middle" font-family="Liberation Sans" fill="#222">ABC</text><path d="M-6,-1 L-6,8 M-8,5 L-6,9 L-4,5" fill="none" stroke="#111" stroke-width="1.1"/></g>
<g transform="translate(43,331) scale(1.0)"><path d="M0,1 L0,-9" stroke="#1a3cd0" stroke-width="2.2"/><path d="M-3,-6 L0,-10 L3,-6 Z" fill="#1a3cd0"/><path d="M0,1 L-9,6" stroke="#1a9a20" stroke-width="2.2"/><path d="M0,1 L8,7" stroke="#d01818" stroke-width="2.2"/><path d="M0,1 L-8,-3" stroke="#1a9a20" stroke-width="1.2"/><path d="M0,1 L7,-3" stroke="#d01818" stroke-width="1.2"/></g>
<g transform="translate(67,331) scale(1.0)"><path d="M-8,9 L-1,-9 L3,-9 L9,9 L4,9 L2.5,4 L-3,4 L-4,9 Z" fill="#8a7a5a" stroke="#222" stroke-width="1"/><path d="M-2,1 L2,1 L0,-5 Z" fill="#ece9d8" stroke="#222" stroke-width="0.7"/></g>
<g transform="translate(43,359) scale(1.0)"><path d="M-1,-9 Q-9,-3 -4,2 Q-1,5 3,8.5" fill="none" stroke="#161616" stroke-width="1.7"/><path d="M-9,-1 Q-3,-6 4,-5" fill="none" stroke="#3a7ee0" stroke-width="3.2"/><path d="M3,-9 L9,-4.5 L2.5,-1 Z" fill="#2a66cc"/><path d="M-6,3.5 Q1,6.5 7,2" fill="none" stroke="#3a7ee0" stroke-width="3.2"/><path d="M5,-2 L9,4 L3,5 Z" fill="#2a66cc"/><path d="M1,-3 Q-2,0 1,4" fill="none" stroke="#161616" stroke-width="1.2"/></g>
<g transform="translate(67,359) scale(1.0)"><path d="M-8,4 Q-6,-1 -4,-2 L-2,-7 Q-1,-9 0.5,-7.5 L1,-3 L2,-8 Q3.5,-9.5 4.5,-7.5 L4,-3 L6,-7 Q7.5,-8 8,-6 L6,0 L8,-2 Q9.5,-2 9,0 L5,6 Q1,10 -4,8 Z" fill="#fff" stroke="#444" stroke-width="0.9"/></g>
<g transform="translate(43,382) scale(1.0)"><path d="M1,1 L8,8" stroke="#111" stroke-width="2.8" stroke-linecap="round"/><circle cx="-3" cy="-3" r="5.5" fill="#a9c3d8" stroke="#1a1a1a" stroke-width="1.9"/><circle cx="-4" cy="-4" r="1.6" fill="#cfe0ee"/></g>
<g transform="translate(67,382) scale(1.0)"><path d="M-9,-9 L-5,-9 L-9,-5 Z M9,-9 L9,-5 L5,-9 Z M-9,9 L-9,5 L-5,9 Z" fill="#4a80d0"/><path d="M-8,-8 L-4,-4 M8,-8 L4,-4 M-8,8 L-4,4" stroke="#4a80d0" stroke-width="1.6"/><path d="M2,2 L8,8" stroke="#111" stroke-width="2.6" stroke-linecap="round"/><circle cx="-0.5" cy="-0.5" r="5" fill="#a9c3d8" stroke="#1a1a1a" stroke-width="1.8"/></g>
<g transform="translate(43,405) scale(1.0)"><path d="M1,2 L6,8.5" stroke="#111" stroke-width="2.8" stroke-linecap="round"/><circle cx="-3.5" cy="-3" r="5.3" fill="#a9c3d8" stroke="#1a1a1a" stroke-width="1.8"/><path d="M-3,0 Q0,-5 4,-4 Q8,-3 7,1 Q6,4 2,7 L-1,4 Q-5,3 -3,0 Z" fill="#3a7ee0" stroke="#1a3a80" stroke-width="0.6"/><path d="M-2,8 L1,5" stroke="#111" stroke-width="2.4"/></g>
<g transform="translate(67,405) scale(1.0)"><path d="M-1,2 L-6,8.5" stroke="#111" stroke-width="2.8" stroke-linecap="round"/><circle cx="3.5" cy="-3" r="5.3" fill="#a9c3d8" stroke="#1a1a1a" stroke-width="1.8"/><path d="M3,0 Q0,-5 -4,-4 Q-8,-3 -7,1 Q-6,4 -2,7 L1,4 Q5,3 3,0 Z" fill="#3a7ee0" stroke="#1a3a80" stroke-width="0.6"/><path d="M2,8 L-1,5" stroke="#111" stroke-width="2.4"/></g>
<g transform="translate(43,435) scale(1.0)"><path d="M-1,-9 Q2,-9 2,-6 L3,-3 L3,4 L-3,4 L-3,-3 L-2,-6 Q-3,-9 -1,-9 Z" fill="#fff" stroke="#111" stroke-width="1.1"/><path d="M-1,-1 L-1,3" stroke="#111" stroke-width="1.5"/><path d="M-7,9 L-3,5 L0,7 L3,5 L7,9" fill="none" stroke="#d81818" stroke-width="1.2"/></g>
<g transform="translate(67,435) scale(1.0)"><path d="M-9,0 Q0,-9 9,-1 Q1,6 -9,0 Z" fill="#f4f4f4" stroke="#333" stroke-width="0.9"/><circle cx="0" cy="-1.5" r="3.5" fill="#222"/><circle cx="-1" cy="-2.5" r="1" fill="#fff"/><path d="M-8,-4 Q0,-10 8,-4" fill="none" stroke="#444" stroke-width="1.2"/></g>
<g transform="translate(43,458) scale(1.0)"><path d="M-5,-5 Q-2,-6 -1.5,-1 Q-1.5,2 -3,3 Q-5.5,3 -7,-1 Q-7.5,-4 -5,-5 Z" fill="#111"/><ellipse cx="-3.5" cy="6.5" rx="1.9" ry="2.2" fill="#111"/><path d="M3,-9.5 Q6,-10 6.2,-5 Q6,-2 4.5,-1.5 Q2,-1.5 1,-5 Q1,-9 3,-9.5 Z" fill="#111"/><ellipse cx="3.8" cy="2" rx="1.9" ry="2.2" fill="#111"/></g>
<g transform="translate(67,458) scale(1.0)"><path d="M2,-9 L9.5,0 L2,9 Z" fill="#111"/><circle cx="-1" cy="0" r="6.6" fill="#fff" stroke="#111" stroke-width="1.4"/><path d="M-9,0 L5.5,0" stroke="#111" stroke-width="1.1"/><path d="M0.5,-4.5 Q-1,-5.5 -2.2,-4 Q-2.8,-2.5 -1.5,-1.6 Q-0.5,-1.3 0.5,-2" fill="none" stroke="#111" stroke-width="0.9"/><path d="M-4,1.5 L-4,5 M-4,1.5 L-2.5,1.5 L-2.5,3 L-4,3 L-2.3,5 M-1.5,3.2 L-0.5,3.2 M2,1.8 Q0,1.3 0.5,3 Q2,3.5 1.5,5 Q0,5.5 0,4.5" fill="none" stroke="#111" stroke-width="0.8"/></g>
<g transform="translate(41,790)"><circle r="7.2" fill="#f4eee0" stroke="#7a6030" stroke-width="1.6"/><path d="M-2,-4 Q0,-6 2,-4 L1,1 L-1,1 Z" fill="#f0a0a0" stroke="#c08080" stroke-width="0.6"/><path d="M0,1 L0,5" stroke="#c08080"/></g>
<g transform="translate(63,790)"><circle r="7.2" fill="#f4eee0" stroke="#7a6030" stroke-width="1.6"/><circle cx="0" cy="-4" r="1.6" fill="#111"/><path d="M-2,-2 L2,-2 L2,3 L1,3 L1,6 L-1,6 L-1,3 L-2,3 Z" fill="#111"/></g>
<g transform="translate(85,790)"><circle r="7.2" fill="#f4eee0" stroke="#7a6030" stroke-width="1.6"/><path d="M3,-3 Q0,-6 -3,-3 Q-5,0 -3,3 Q0,6 3,3" fill="none" stroke="#c8b090" stroke-width="1.4"/></g>
<line x1="100.5" y1="782" x2="100.5" y2="798" stroke="#c2bfae" stroke-width="1"/>
<line x1="101.5" y1="782" x2="101.5" y2="798" stroke="#f8f7f2" stroke-width="1"/>
<g transform="translate(114,790)"><circle r="7.6" fill="#cfe0f0" stroke="#2a3a50" stroke-width="1.4"/><text x="0" y="4.2" font-size="12" font-weight="bold" text-anchor="middle" font-family="Liberation Sans" fill="#111">?</text></g>
<line x1="790.5" y1="782" x2="790.5" y2="798" stroke="#c2bfae" stroke-width="1"/>
<line x1="791.5" y1="782" x2="791.5" y2="798" stroke="#f8f7f2" stroke-width="1"/>
<rect x="897.5" y="781.5" width="101" height="19" fill="#ece9d8"/>
<path d="M897.5,800 L897.5,781.5 L998.5,781.5 L998.5,800" fill="none" stroke="#b5b2a2" stroke-width="1"/>
<g transform="translate(40,9)"><path d="M-6,3 L-1,-5 L6,-2 L1,6 Z" fill="#f4f4f4" stroke="#888" stroke-width="0.6"/><path d="M-1,2 L6,-6" stroke="#d81818" stroke-width="2.2"/><path d="M-5,0 L-2,-3" stroke="#f0a020" stroke-width="1.5"/></g>
<rect x="952" y="11" width="7" height="2.5" fill="#fff"/>
<rect x="971.5" y="5.5" width="6" height="5" fill="none" stroke="#fff" stroke-width="1.3"/><rect x="969" y="8.5" width="6" height="5" fill="#2a62e8" stroke="#fff" stroke-width="1.3"/>
<path d="M987,5 L994,13 M994,5 L987,13" stroke="#fff" stroke-width="1.8"/>
<g transform="translate(16.5,13) scale(1.3) skewY(-8)"><path d="M-7,-4.5 Q-4,-6.5 -0.8,-5 L-1.8,-0.3 Q-5,-1.8 -8,-0.2 Z" fill="#f05a28"/><path d="M0.6,-4.8 Q3.8,-3.2 7,-4.8 L6,-0.1 Q2.8,1.5 -0.4,-0.1 Z" fill="#7ac043"/><path d="M-8.2,0.8 Q-5.2,-0.8 -2,0.8 L-3,5.5 Q-6.2,4 -9.2,5.5 Z" fill="#1a8ee0"/><path d="M-0.6,0.9 Q2.6,2.5 5.8,0.9 L4.8,5.6 Q1.6,7.2 -1.6,5.6 Z" fill="#f8c000"/></g>
<rect x="2.5" y="34.5" width="26" height="24" rx="3" fill="#3a7ef0" stroke="#5a96f8" stroke-width="1"/>
<rect x="9" y="40" width="13" height="12" fill="#f8d890" stroke="#d8a040" stroke-width="0.8"/><path d="M11,43 Q14,50 20,49" fill="none" stroke="#c88820" stroke-width="1.2"/>
<rect x="2.5" y="61.0" width="26" height="24" rx="3" fill="#3a7ef0" stroke="#5a96f8" stroke-width="1"/>
<rect x="8" y="67.5" width="9" height="8" fill="#2a4aa0" stroke="#fff" stroke-width="1"/><rect x="15" y="65.5" width="7" height="14" fill="#e8eef8" stroke="#8aa0d0" stroke-width="0.8"/>
<rect x="2.5" y="87.5" width="26" height="24" rx="3" fill="#3a7ef0" stroke="#5a96f8" stroke-width="1"/>
<rect x="12" y="92" width="10" height="14" fill="#f4f4f4" stroke="#aab" stroke-width="0.8"/><path d="M8,100 Q12,93 17,97 Q13,104 9,103" fill="none" stroke="#1a60d0" stroke-width="2"/>
<rect x="2.5" y="114.0" width="26" height="24" rx="3" fill="#1e4cbc" stroke="#163a98" stroke-width="1"/>
<g transform="translate(15.5,125.5)"><path d="M-5,2 L-1,-5 L5,-2 L1,5 Z" fill="#f4f4f4" stroke="#aaa" stroke-width="0.6"/><path d="M-1,2 L6,-5" stroke="#d81818" stroke-width="2.2"/><path d="M-4,0 L-2,-2" stroke="#f0a020" stroke-width="1.5"/></g>
<rect x="2.5" y="140.5" width="26" height="24" rx="3" fill="#3a7ef0" stroke="#5a96f8" stroke-width="1"/>
<rect x="8" y="147" width="15" height="11" fill="#b8f070" stroke="#2a6a20" stroke-width="1"/><path d="M10,151 L21,151 M10,154 L21,154" stroke="#2a6a20" stroke-width="1"/><rect x="14" y="144" width="3" height="3" fill="#f0a020"/>
<rect x="2.5" y="167.0" width="26" height="24" rx="3" fill="#3a7ef0" stroke="#5a96f8" stroke-width="1"/>
<path d="M10,172.5 L13,185.5 L19,185.5 L22,172.5 Z" fill="#f0c040" stroke="#b04030" stroke-width="1"/><path d="M12,174.5 L16,183.5 M20,173.5 L15,182.5" stroke="#d03030" stroke-width="1.5"/>
<rect x="2.5" y="193.5" width="26" height="24" rx="3" fill="#3a7ef0" stroke="#5a96f8" stroke-width="1"/>
<path d="M8,202 L13,202 L15,204 L23,204 L22,211 L8,211 Z" fill="#f8e070" stroke="#a08020" stroke-width="0.9"/>
<rect x="2.5" y="220.0" width="26" height="24" rx="3" fill="#3a7ef0" stroke="#5a96f8" stroke-width="1"/>
<rect x="8" y="225.5" width="15" height="12" fill="#3a9a40" stroke="#1a3a80" stroke-width="1.2"/><path d="M9,228.5 L22,228.5 L22,231.5 Q15,229.5 9,232.5 Z" fill="#a8d8f8"/>
<text x="15" y="600" font-size="11" text-anchor="middle" font-family="Liberation Sans" fill="#fff">EN</text>
<g>
<rect x="9" y="621" width="13" height="13" fill="#1a3ab0" stroke="#0a1a60" stroke-width="0.6"/><rect x="11" y="627" width="9" height="6" fill="#fff"/><path d="M11,629.5 L20,629.5" stroke="#d03030"/><rect x="13" y="621.5" width="5" height="3.5" fill="#ddd"/>
<circle cx="15.5" cy="645" r="6" fill="#c84040"/><circle cx="13.5" cy="643" r="1.3" fill="#fff"/><circle cx="17.5" cy="646" r="1.3" fill="#fff"/><circle cx="14" cy="648" r="1" fill="#fff"/>
<rect x="8.5" y="655" width="14" height="14" fill="#f8d890" stroke="#d8a040" stroke-width="1"/><circle cx="15.5" cy="662" r="4.5" fill="none" stroke="#b07020" stroke-width="1.2"/><path d="M15.5,659.5 L15.5,662 L17.5,663" stroke="#b07020" stroke-width="1"/>
<path d="M10,674 L21,674 L21,685 L10,685 Z" fill="#e8f000" opacity=".9"/><path d="M12,677 L19,677 M12,681 L19,681 M15.5,674 L15.5,685" stroke="#608000" stroke-width="1.2"/>
<rect x="8" y="688" width="15" height="15" fill="#800010"/><text x="15.5" y="699.5" font-size="10" text-anchor="middle" font-family="Liberation Sans" fill="#fff">En</text>
<path d="M9,714 L17,707 L17,721 Z" fill="#f08050"/><path d="M19,708 L19,720 M21.5,709 L21.5,719" stroke="#203060" stroke-width="1.5"/>
<circle cx="14" cy="729" r="5.5" fill="#9aa0a8" stroke="#505860" stroke-width="1"/><circle cx="14" cy="729" r="2" fill="#d0d4d8"/><path d="M18,734 L22,731" stroke="#90b0ff" stroke-width="1.5"/>
<path d="M8,740 L11,740 L11,744 L18,740 L21,742 L14,746 L20,752 L17,754 L11,748 L11,754 L8,754 Z" fill="#e01818"/><rect x="16" y="749" width="5" height="5" fill="#111"/>
<path d="M9,758 L20,757 L23,771 L11,772 Z" fill="#1a2ad0" stroke="#a8b8f8" stroke-width="1.2"/>
</g>
<text x="15.5" y="790" font-size="11" text-anchor="middle" font-family="Liberation Sans" fill="#cfe8ff">15:03</text>
</svg>
<!--/CHROME-->
</body></html>
